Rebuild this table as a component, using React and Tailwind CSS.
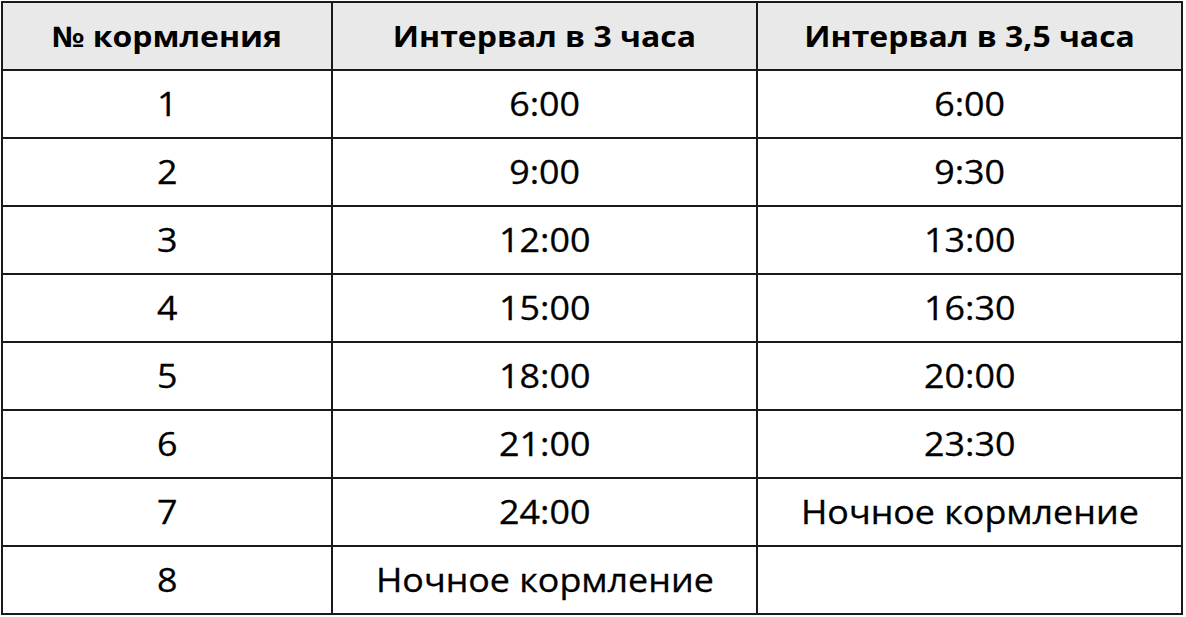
const rows = [
  ['1', '6:00', '6:00'],
  ['2', '9:00', '9:30'],
  ['3', '12:00', '13:00'],
  ['4', '15:00', '16:30'],
  ['5', '18:00', '20:00'],
  ['6', '21:00', '23:30'],
  ['7', '24:00', 'Ночное кормление'],
  ['8', 'Ночное кормление', ''],
];

const headers = ['№ кормления', 'Интервал в 3 часа', 'Интервал в 3,5 часа'];

export default function App() {
  return (
    <div className="min-h-screen bg-white pl-[1px] pt-[1px] font-['Open_Sans',sans-serif] text-black">
      <div className="grid w-[1182px] grid-cols-[328px_423px_423px] auto-rows-[66px] gap-[2px] bg-[#1a1a1a] p-[2px]">
        {headers.map((h) => (
          <div key={h} className="flex items-center justify-center bg-[#e9e9e9]">
            <span className="inline-block scale-x-[1.12] whitespace-nowrap text-[28.5px] font-bold">{h}</span>
          </div>
        ))}
        {rows.map((r) =>
          r.map((c, i) => (
            <div key={r[0] + '-' + i} className="flex items-center justify-center bg-white">
              <span className="inline-block scale-x-[1.12] whitespace-nowrap text-[32px] [-webkit-text-stroke:0.3px_black]">{c}</span>
            </div>
          ))
        )}
      </div>
    </div>
  );
}
